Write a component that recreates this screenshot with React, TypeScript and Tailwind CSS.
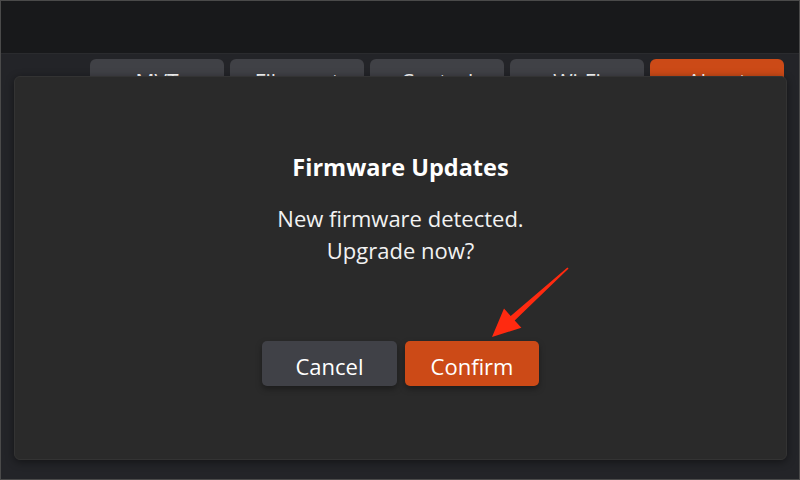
const tabs = ["MVT", "Filament", "Control", "Wi-Fi", "About"];

const Arrow = () => (
  <svg
    className="pointer-events-none absolute left-0 top-0"
    width="800"
    height="480"
    viewBox="0 0 800 480"
  >
    <polygon
      fill="#ff2a10"
      points="567.6,267.6 513.7,319.4 520.4,326.8 491,336 503,307.6 509.7,315 566.4,266.4"
    />
  </svg>
);

const App = () => {
  return (
    <div
      className="relative h-[480px] w-[800px] overflow-hidden border border-[#4a4a4a] bg-[#232428]"
      style={{ fontFamily: '"Open Sans", "Noto Sans", sans-serif' }}
    >
      <div className="h-[53px] border-b border-[#2a2b2e] bg-[#18191b]" />
      <div className="flex gap-[6px] pl-[89px] pt-[5px]">
        {tabs.map((t, i) => (
          <div
            key={t}
            className={`flex h-[44px] w-[134px] items-center justify-center rounded-md pt-[4px] text-[21px] text-white ${
              i === 4 ? "bg-[#cc4a17]" : "bg-[#404146]"
            }`}
          >
            {t}
          </div>
        ))}
      </div>

      <div className="absolute left-[13px] top-[75px] flex h-[384px] w-[773px] flex-col items-center rounded-md border border-[#333333] bg-[#2a2a2a] pt-[74px] shadow-[0_2px_8px_rgba(0,0,0,0.45)]">
        <h2 className="text-[23.5px] font-bold leading-[32px] text-white">
          Firmware Updates
        </h2>
        <p className="mt-[19px] text-center text-[22px] leading-[32px] text-[#f2f2f2]">
          New firmware detected.
          <br />
          Upgrade now?
        </p>
        <div className="mt-[75px] flex gap-2">
          <button className="h-[45px] w-[135px] rounded-[5px] bg-[#404147] pt-[5px] text-[22px] text-white shadow-[0_3px_6px_rgba(0,0,0,0.35)]">
            Cancel
          </button>
          <button className="h-[45px] w-[134px] rounded-[5px] bg-[#cc4a17] pt-[5px] text-[22px] text-white shadow-[0_3px_6px_rgba(0,0,0,0.35)]">
            Confirm
          </button>
        </div>
      </div>
      <Arrow />
    </div>
  );
};

export default App;
